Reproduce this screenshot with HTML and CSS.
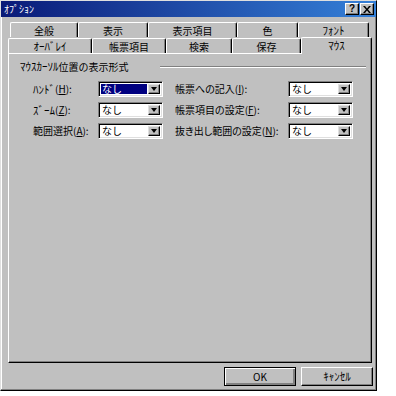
FILE: index.html
```html
<!DOCTYPE html>
<html lang="ja">

<head>
    <meta charset="UTF-8">
    <meta name="viewport" content="width=device-width, initial-scale=1.0">
    <title>オプション</title>
    <link rel="stylesheet" href="styles.css">
</head>

<body>
    <div class="dialog">
        <div class="titlebar">
            <span class="titlebar__text">ｵﾌﾟｼｮﾝ</span>
            <div class="titlebar__buttons">
                <span class="titlebar__btn">?</span>
                <span class="titlebar__btn titlebar__btn--close">
                    <svg width="8" height="7" viewBox="0 0 8 7">
                        <path d="M0 0h2l2 2.5L6 0h2L5 3.5 8 7H6L4 4.5 2 7H0l3-3.5z" fill="#000"/>
                    </svg>
                </span>
            </div>
        </div>

        <div class="dialog__body">
            <div class="tabs">
                <div class="tabs__row tabs__row--back">
                    <div class="tab tab--w68">全般</div>
                    <div class="tab tab--w70">表示</div>
                    <div class="tab tab--w89">表示項目</div>
                    <div class="tab tab--w61">色</div>
                    <div class="tab tab--w71"><span class="hw">ﾌｫﾝﾄ</span></div>
                </div>
                <div class="tabs__row tabs__row--front">
                    <div class="tab tab--w84"><span class="hw">ｵｰﾊﾞﾚｲ</span></div>
                    <div class="tab tab--w74">帳票項目</div>
                    <div class="tab tab--w66">検索</div>
                    <div class="tab tab--w69">保存</div>
                    <div class="tab tab--w71 tab--active"><span class="hw">ﾏｳｽ</span></div>
                </div>
            </div>

            <div class="panel">
                <div class="group__title">
                    <span><span class="hw">ﾏｳｽｶｰｿﾙ</span>位置の表示形式</span>
                    <span class="group__line"></span>
                </div>
                <div class="fields">
                    <label class="field__label"><span class="hw">ﾊﾝﾄﾞ</span>(<u>H</u>):</label>
                    <div class="select"><span class="select__value select__value--focus">なし</span><span class="select__btn"></span></div>
                    <label class="field__label field__label--right">帳票への記入(<u>I</u>):</label>
                    <div class="select"><span class="select__value">なし</span><span class="select__btn"></span></div>

                    <label class="field__label"><span class="hw">ｽﾞｰﾑ</span>(<u>Z</u>):</label>
                    <div class="select"><span class="select__value">なし</span><span class="select__btn"></span></div>
                    <label class="field__label field__label--right">帳票項目の設定(<u>F</u>):</label>
                    <div class="select"><span class="select__value">なし</span><span class="select__btn"></span></div>

                    <label class="field__label">範囲選択(<u>A</u>):</label>
                    <div class="select"><span class="select__value">なし</span><span class="select__btn"></span></div>
                    <label class="field__label field__label--right">抜き出し範囲の設定(<u>N</u>):</label>
                    <div class="select"><span class="select__value">なし</span><span class="select__btn"></span></div>
                </div>
            </div>

            <div class="actions">
                <button class="button button--default">OK</button>
                <button class="button"><span class="hw">ｷｬﾝｾﾙ</span></button>
            </div>
        </div>
    </div>
</body>

</html>
```

FILE: styles.css
```css
:root {
    --color-face: #c0c0c0;
    --color-light: #dfdfdf;
    --color-shadow: #808080;
    --color-dark: #000;
    --color-title: #0a1a78;
    --color-title-end: #3580d8;
}

body {
    margin: 0;
    background: #fff;
    font-family: "Noto Sans CJK JP", "Liberation Sans", sans-serif;
    font-size: 10px;
    color: #000;
}

/* half-width katakana runs sit a little larger, like the old UI font */
.hw {
    font-size: 11px;
    line-height: 11px;
    vertical-align: top;
}

.dialog {
    width: 377px;
    height: 391px;
    box-sizing: border-box;
    background: var(--color-face);
    border: 1px solid;
    border-color: var(--color-light) var(--color-dark) var(--color-dark) var(--color-light);
    box-shadow: inset -1px -1px var(--color-shadow), inset 1px 1px #fff;
}

.titlebar {
    height: 16px;
    display: flex;
    align-items: center;
    justify-content: space-between;
    padding: 0 2px 0 3px;
    background: linear-gradient(to right, var(--color-title), var(--color-title-end));
}

.titlebar__text {
    color: #fff;
    font-size: 10px;
    line-height: 12px;
}

.titlebar__buttons {
    display: flex;
    gap: 1px;
}

.titlebar__btn {
    width: 12px;
    height: 10px;
    display: flex;
    align-items: center;
    justify-content: center;
    background: var(--color-face);
    border: 1px solid;
    border-color: #fff var(--color-dark) var(--color-dark) #fff;
    box-shadow: inset -1px -1px var(--color-shadow);
    font-family: "Liberation Sans", sans-serif;
    font-weight: bold;
    font-size: 10px;
    line-height: 10px;
}

.dialog__body {
    padding: 5px 0 0 7px;
}

.tabs {
    width: 365px;
    height: 31px;
}

.tabs__row {
    display: flex;
    height: 15px;
}

.tabs__row--back {
    padding-left: 2px;
}

.tabs__row--front {
    height: 16px;
    align-items: flex-end;
}

.tab {
    box-sizing: border-box;
    height: 15px;
    display: flex;
    align-items: center;
    justify-content: center;
    background: var(--color-face);
    border-top: 1px solid #fff;
    border-left: 1px solid #fff;
    border-right: 1px solid var(--color-dark);
    border-radius: 2px 2px 0 0;
    box-shadow: inset -1px 0 var(--color-shadow);
    line-height: 11px;
}

.tab--w61 { width: 61px; }
.tab--w66 { width: 66px; }
.tab--w68 { width: 68px; }
.tab--w69 { width: 69px; }
.tab--w70 { width: 70px; }
.tab--w71 { width: 71px; }
.tab--w74 { width: 74px; }
.tab--w84 { width: 84px; }
.tab--w89 { width: 89px; }

.tab--active {
    position: relative;
    z-index: 1;
    height: 17px;
    margin-bottom: -1px;
    align-items: flex-start;
    padding-top: 2px;
}

.panel {
    width: 364px;
    height: 310px;
    box-sizing: border-box;
    border: 1px solid;
    border-color: #fff var(--color-dark) var(--color-dark) #fff;
    box-shadow: inset -1px -1px var(--color-shadow);
    padding: 7px 0 0 11px;
}

.group__title {
    display: flex;
    align-items: center;
    height: 12px;
    line-height: 12px;
}

.group__line {
    width: 206px;
    margin-left: auto;
    margin-right: 5px;
    border-top: 1px solid var(--color-shadow);
    border-bottom: 1px solid #fff;
}

.fields {
    display: grid;
    grid-template-columns: 65px 65px 125px 65px;
    grid-auto-rows: 16px;
    row-gap: 5px;
    margin: 8px 0 0 13px;
}

.field__label {
    display: flex;
    align-items: center;
    line-height: 12px;
}

.field__label--right {
    padding-left: 12px;
    font-feature-settings: "palt";
}

.field__label u {
    text-underline-offset: 1px;
}

.select {
    box-sizing: border-box;
    display: flex;
    align-items: center;
    background: #fff;
    border: 1px solid;
    border-color: var(--color-shadow) #fff #fff var(--color-shadow);
    box-shadow: inset 1px 1px var(--color-dark), inset -1px -1px var(--color-light);
    padding: 2px;
}

.select__value {
    flex: 1;
    height: 10px;
    display: flex;
    align-items: center;
    padding-left: 1px;
    line-height: 12px;
}

.select__value--focus {
    background: #000080;
    color: #fff;
    margin-right: 1px;
}

.select__btn {
    width: 12px;
    height: 10px;
    box-sizing: border-box;
    display: flex;
    align-items: center;
    justify-content: center;
    background: var(--color-face);
    border: 1px solid;
    border-color: var(--color-light) var(--color-dark) var(--color-dark) var(--color-light);
    box-shadow: inset -1px -1px var(--color-shadow);
}

.select__btn::before {
    content: '';
    border-left: 3px solid transparent;
    border-right: 3px solid transparent;
    border-top: 4px solid #000;
}

.actions {
    display: flex;
    justify-content: flex-end;
    gap: 5px;
    width: 365px;
    margin-top: 4px;
}

.button {
    width: 72px;
    height: 19px;
    box-sizing: border-box;
    padding: 0;
    background: var(--color-face);
    border: 1px solid;
    border-color: #fff var(--color-dark) var(--color-dark) #fff;
    box-shadow: inset -1px -1px var(--color-shadow);
    font-family: inherit;
    font-size: 10px;
    line-height: 12px;
    color: #000;
}

.button--default {
    border-color: var(--color-dark);
    box-shadow: inset 1px 1px #fff, inset -2px -2px var(--color-shadow);
}
```
